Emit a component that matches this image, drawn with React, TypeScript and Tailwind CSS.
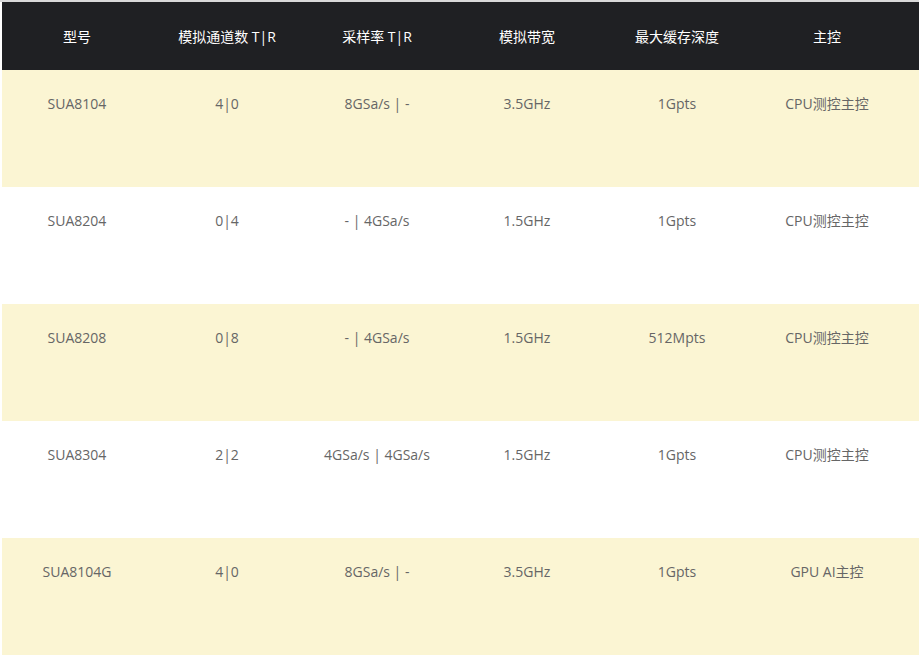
const headers = ["型号", "模拟通道数 T|R", "采样率 T|R", "模拟带宽", "最大缓存深度", "主控"];

const rows = [
  ["SUA8104", "4|0", "8GSa/s | -", "3.5GHz", "1Gpts", "CPU测控主控"],
  ["SUA8204", "0|4", "- | 4GSa/s", "1.5GHz", "1Gpts", "CPU测控主控"],
  ["SUA8208", "0|8", "- | 4GSa/s", "1.5GHz", "512Mpts", "CPU测控主控"],
  ["SUA8304", "2|2", "4GSa/s | 4GSa/s", "1.5GHz", "1Gpts", "CPU测控主控"],
  ["SUA8104G", "4|0", "8GSa/s | -", "3.5GHz", "1Gpts", "GPU AI主控"],
];

const App = () => {
  return (
    <div
      className="w-[919px] h-[659px] overflow-hidden bg-white pl-[2px] border-t-2 border-[#d9d9d9]"
      style={{ fontFamily: '"Open Sans", "Noto Sans CJK SC", sans-serif' }}
    >
      <div className="w-[917px]">
        <div className="flex h-[68px] items-center bg-[#1f2023] text-white text-[14px]">
          {headers.map((h) => (
            <div key={h} className="w-[150px] shrink-0 text-center">
              {h}
            </div>
          ))}
        </div>
        {rows.map((row, i) => (
          <div
            key={row[0]}
            className={`flex h-[117px] pt-[24px] items-start text-[14px] text-[#666666] ${
              i % 2 === 0 ? "bg-[#fbf5d3]" : "bg-white"
            }`}
          >
            {row.map((cell, j) => (
              <div key={j} className="w-[150px] shrink-0 text-center leading-5">
                {cell}
              </div>
            ))}
          </div>
        ))}
      </div>
    </div>
  );
};

export default App;
